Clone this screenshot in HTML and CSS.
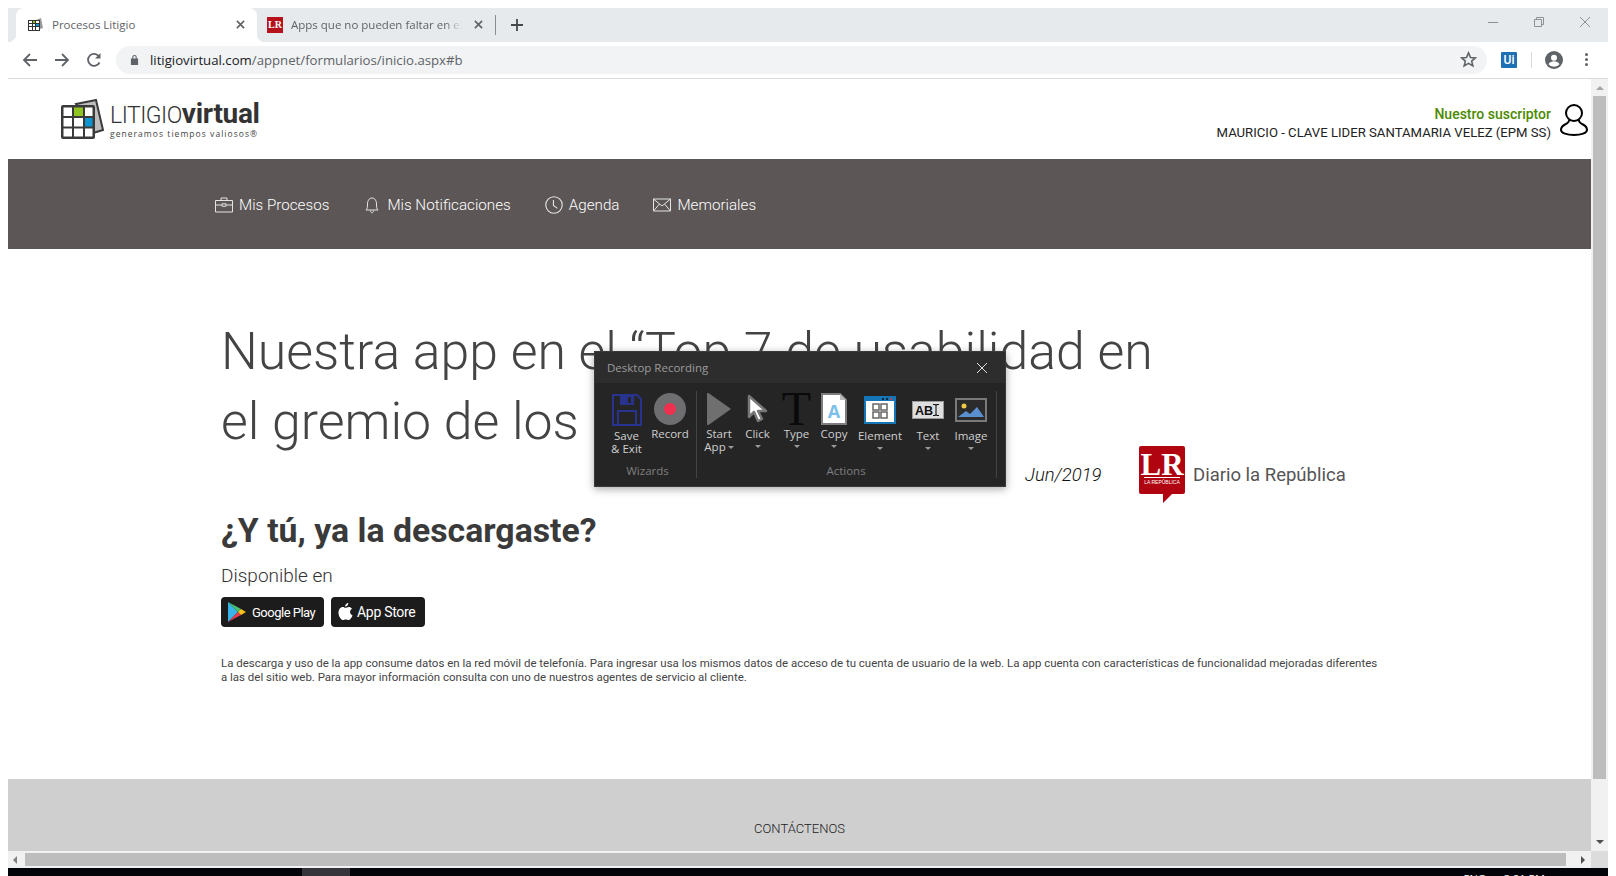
FILE: index.html
```html
<!DOCTYPE html>
<html lang="es">

<head>
    <meta charset="UTF-8">
    <title>Procesos Litigio</title>
    <link rel="stylesheet" href="styles.css">
</head>

<body>
    <div class="tabstrip">
        <div class="tab tab-active">
            <svg class="favicon" viewBox="0 0 16 16"><path d="M9 3l5-2 2 10-3 1z" fill="#999"/><rect x="1" y="3" width="12" height="11" fill="#333"/><path d="M2 4h3v2H2zM6 4h2v2H6zM9 4h3v2H9zM2 7h3v2H2zM6 7h2v2H6zM2 10h3v3H2zM6 10h2v3H6zM9 10h3v3H9z" fill="#fff"/><rect x="6" y="4" width="2" height="2" fill="#8fc31f"/><rect x="9" y="7" width="3" height="2" fill="#0a94d0"/></svg>
            <span class="tab-title">Procesos Litigio</span>
            <svg class="tab-close" viewBox="0 0 10 10"><path d="M1 1l8 8M9 1l-8 8"/></svg>
        </div>
        <div class="tab tab-other">
            <span class="favicon-lr">LR</span>
            <span class="tab-title tab-fade">Apps que no pueden faltar en el celular</span>
            <svg class="tab-close" viewBox="0 0 10 10"><path d="M1 1l8 8M9 1l-8 8"/></svg>
        </div>
        <span class="tab-divider"></span>
        <svg class="new-tab" viewBox="0 0 12 12"><path d="M6 0v12M0 6h12"/></svg>
        <div class="window-btns">
            <span class="win-btn"><svg viewBox="0 0 10 10" width="10" height="10"><path d="M0 5.5h10"/></svg></span>
            <span class="win-btn"><svg viewBox="0 0 10 10" width="10" height="10"><path d="M.5 2.5h7v7h-7zM2.5 2.5v-2h7v7h-2"/></svg></span>
            <span class="win-btn"><svg viewBox="0 0 10 10" width="10" height="10"><path d="M0 0l10 10M10 0L0 10"/></svg></span>
        </div>
    </div>

    <div class="toolbar">
        <span class="nav-btn"><svg viewBox="0 0 16 16"><path d="M15 8H2M8 2L2 8l6 6"/></svg></span>
        <span class="nav-btn"><svg viewBox="0 0 16 16"><path d="M1 8h13M8 2l6 6-6 6"/></svg></span>
        <span class="nav-btn"><svg viewBox="0 0 16 16"><path d="M13.5 10.5A6 6 0 1 1 13 4.5"/><path class="solid" d="M14.500 1v5.500H9z"/></svg></span>
        <div class="omnibox">
            <svg class="lock" viewBox="0 0 10 12"><path d="M2.500 5V3.500a2.500 2.500 0 0 1 5 0V5h1.500v7H1V5zM3.700 5h2.600V3.500a1.300 1.300 0 0 0-2.600 0z"/></svg>
            <span class="url"><span class="url-host">litigiovirtual.com</span>/appnet/formularios/inicio.aspx#b</span>
            <svg class="star" viewBox="0 0 16 16"><path d="M8 1.800l1.900 4.300 4.600.4-3.500 3 1.100 4.600L8 11.700l-4.100 2.400L5 9.500l-3.500-3 4.600-.4z"/></svg>
        </div>
        <span class="ext-ui">Ui</span>
        <span class="toolbar-divider"></span>
        <svg class="avatar" viewBox="0 0 18 18"><circle cx="9" cy="9" r="9"/><circle cx="9" cy="6.800" r="3" fill="#fff"/><path d="M3.500 13.200c1-2 3.500-2.900 5.500-2.900s4.500.9 5.500 2.900a7 7 0 0 1-11 0z" fill="#fff"/></svg>
        <span class="dots"><i></i><i></i><i></i></span>
    </div>

    <div class="viewport">
        <div class="page">
            <header class="site-header">
                <div class="logo">
                    <svg class="logo-mark" viewBox="0 0 44 41">
                        <path d="M16 5L36 1l7 30-10 3z" fill="#bdbdbd" stroke="#3a3a3a" stroke-width="2"/>
                        <rect x="1" y="6" width="34" height="34" rx="2" fill="#3a3a3a"/>
                        <rect x="3.500" y="8.500" width="8.500" height="8.500" fill="#fff"/><rect x="14" y="8.500" width="9" height="8.500" fill="#8fc31f"/><rect x="25" y="8.500" width="7.500" height="8.500" fill="#fff"/>
                        <rect x="3.500" y="19" width="8.500" height="8.500" fill="#fff"/><rect x="14" y="19" width="9" height="8.500" fill="#fff"/><rect x="25" y="19" width="7.500" height="8.500" fill="#0a94d0"/>
                        <rect x="3.500" y="29.500" width="8.500" height="8" fill="#fff"/><rect x="14" y="29.500" width="9" height="8" fill="#fff"/><rect x="25" y="29.500" width="7.500" height="8" fill="#fff"/>
                    </svg>
                    <div class="logo-text">
                        <div class="logo-name"><span class="logo-light">LITIGIO</span><span class="logo-bold">virtual</span></div>
                        <div class="logo-tag">generamos tiempos valiosos®</div>
                    </div>
                </div>
                <div class="user">
                    <div class="user-text">
                        <div class="user-label">Nuestro suscriptor</div>
                        <div class="user-name">MAURICIO - CLAVE LIDER SANTAMARIA VELEZ (EPM SS)</div>
                    </div>
                    <svg class="user-icon" viewBox="0 0 28 33"><circle cx="14" cy="10" r="8"/><path d="M9 16.500c.5 2-1 3.500-4 5-3 1.500-4 3.500-4 5.500 0 3 6 5 13 5s13-2 13-5c0-2-1-4-4-5.500-3-1.500-4.500-3-4-5"/></svg>
                </div>
            </header>

            <nav class="main-nav">
                <a class="nav-item">
                    <svg viewBox="0 0 18 16"><path d="M.5 3.500h17v11.500H.5zM6 3.500V1h6v2.500M.5 8h6.500M11 8h6.500M7 6.800h4v2.400H7z"/></svg>
                    Mis Procesos
                </a>
                <a class="nav-item">
                    <svg viewBox="0 0 14 18"><path d="M1 14c1.500-1.500 1.500-3 1.500-6s1.500-6 4.500-6 4.500 3 4.500 6 0 4.500 1.500 6zM5.500 14.500c0 3 3 3 3 0"/></svg>
                    Mis Notificaciones
                </a>
                <a class="nav-item">
                    <svg viewBox="0 0 16 16"><circle cx="8" cy="8" r="7.300"/><path d="M7.500 3.500V8.500L11 11"/></svg>
                    Agenda
                </a>
                <a class="nav-item">
                    <svg viewBox="0 0 18 14"><path d="M.5 1h17v12H.5zM.5 1L9 8l8.500-7M.5 13l6-7M17.500 13l-6-7"/></svg>
                    Memoriales
                </a>
            </nav>

            <main class="content">
                <h1 class="headline">Nuestra app en el “Top 7 de usabilidad en el gremio de los abogados”</h1>
                <div class="source">
                    <span class="source-date">Jun/2019</span>
                    <svg class="source-logo" viewBox="0 0 46 58">
                        <path d="M2 0h42a2 2 0 0 1 2 2v44a2 2 0 0 1-2 2H33L24 57v-9H2a2 2 0 0 1-2-2V2a2 2 0 0 1 2-2z" fill="#b00410"/>
                        <text class="lr-big" x="23" y="29" text-anchor="middle">LR</text>
                        <rect x="5" y="31" width="36" height="1" fill="#fff"/>
                        <text class="lr-small" x="23" y="38" text-anchor="middle">LA REPÚBLICA</text>
                    </svg>
                    <span class="source-name">Diario la República</span>
                </div>
                <h2 class="download-title">¿Y tú, ya la descargaste?</h2>
                <p class="available">Disponible en</p>
                <div class="badges">
                    <a class="badge badge-play">
                        <svg viewBox="0 0 18 20" width="18" height="20">
                            <path d="M0 0l10 10L0 20z" fill="#39b4e8"/>
                            <path d="M0 0l13 7-3 3z" fill="#48c06f"/>
                            <path d="M0 20l13-7-3-3z" fill="#e8384c"/>
                            <path d="M13 7l5 3-5 3-3-3z" fill="#f8c21c"/>
                        </svg>
                        Google Play
                    </a>
                    <a class="badge badge-apple">
                        <svg viewBox="0 0 16 19" width="15" height="18"><path fill="#fff" d="M11 0c.2 1.800-1.500 3.900-3.400 3.700C7.400 2 9.200.1 11 0zM8 5c1 0 2-.9 3.400-.9 1.300 0 2.700.7 3.500 1.900-3 1.700-2.500 5.900.6 7.100-.8 2.100-2.500 5-4.300 5-1 0-1.600-.7-2.900-.7s-2 .7-3 .7C3 18.100.5 13.700.5 10.300.5 6.700 2.800 4.200 5 4.200 6.200 4.200 7.200 5 8 5z"/></svg>
                        App Store
                    </a>
                </div>
                <p class="note">La descarga y uso de la app consume datos en la red móvil de telefonía. Para ingresar usa los mismos datos de acceso de tu cuenta de usuario de la web. La app cuenta con características de funcionalidad mejoradas diferentes a las del sitio web. Para mayor información consulta con uno de nuestros agentes de servicio al cliente.</p>
            </main>

            <footer class="site-footer">CONTÁCTENOS</footer>
        </div>
        <div class="vscroll">
            <span class="arrow arrow-up"></span>
            <span class="vthumb"></span>
            <span class="arrow arrow-down"></span>
        </div>
    </div>

    <div class="hscroll">
        <span class="arrow arrow-left"></span>
        <span class="hthumb"></span>
        <span class="arrow arrow-right"></span>
        <span class="corner"></span>
    </div>

    <div class="taskbar">
        <span class="task-btn"></span>
        <span class="tray-lang">ENG</span>
        <span class="tray-time">3:21 PM</span>
    </div>

    <!-- floating recorder window -->
    <div class="recorder">
        <div class="rec-title">
            <span>Desktop Recording</span>
            <svg viewBox="0 0 12 12" width="12" height="12"><path d="M1 1l10 10M11 1L1 11"/></svg>
        </div>
        <div class="rec-body">
            <section class="rec-group rec-wizards">
                <div class="rec-tools">
                    <div class="tool tool-save">
                        <div class="tool-icon icon-low">
                            <svg width="30" height="32" viewBox="0 0 30 32"><path d="M1 1h24l4 4v26H1z" fill="none" stroke="#27338f" stroke-width="2"/><path d="M8 1h14v10H8z" fill="#27338f"/><rect x="16" y="3" width="3" height="6" fill="#252526"/><path d="M6 31V17h18v14" fill="none" stroke="#27338f" stroke-width="2"/></svg>
                        </div>
                        <span>Save<br>&amp; Exit</span>
                    </div>
                    <div class="tool tool-record">
                        <div class="tool-icon">
                            <svg width="32" height="32" viewBox="0 0 32 32"><circle cx="16" cy="16" r="16" fill="#6e6e70"/><circle cx="16" cy="16" r="6" fill="#f0304f"/></svg>
                        </div>
                        <span>Record</span>
                    </div>
                </div>
                <div class="rec-caption">Wizards</div>
            </section>
            <section class="rec-group rec-actions">
                <div class="rec-tools">
                    <div class="tool tool-start">
                        <div class="tool-icon">
                            <svg width="24" height="32" viewBox="0 0 24 32"><path d="M0 1a1 1 0 0 1 1.500-1L24 16 1.500 32A1 1 0 0 1 0 31z" fill="#6f6f6f"/></svg>
                        </div>
                        <span>Start<br>App<i class="caret caret-inline"></i></span>
                    </div>
                    <div class="tool tool-click">
                        <div class="tool-icon">
                            <svg width="22" height="30" viewBox="0 0 22 30"><path d="M2 2v21l5-5 4 9 4-2-4-8h8z" fill="#fff" stroke="#777" stroke-width="2.500" stroke-linejoin="round"/></svg>
                        </div>
                        <span>Click</span>
                        <i class="caret"></i>
                    </div>
                    <div class="tool tool-type">
                        <div class="tool-icon"><span class="type-glyph">T</span></div>
                        <span>Type</span>
                        <i class="caret"></i>
                    </div>
                    <div class="tool tool-copy">
                        <div class="tool-icon">
                            <svg width="26" height="32" viewBox="0 0 26 32"><path d="M1 1h18l6 6v24H1z" fill="#fff" stroke="#7d7d7d" stroke-width="2"/><path d="M19 1v6h6z" fill="#bbb"/><text class="copy-a" x="13" y="25" text-anchor="middle">A</text></svg>
                        </div>
                        <span>Copy</span>
                        <i class="caret"></i>
                    </div>
                    <div class="tool tool-element">
                        <div class="tool-icon icon-low">
                            <svg width="32" height="28" viewBox="0 0 32 28"><rect width="32" height="28" fill="#1476b6"/><rect x="2" y="5" width="28" height="21" fill="#fff"/><circle cx="19" cy="3" r="1" fill="#111"/><circle cx="23" cy="3" r="1" fill="#111"/><circle cx="27" cy="3" r="1" fill="#e33"/><path d="M9 9h6v6H9zM17 9h6v6h-6zM9 17h6v6H9zM17 17h6v6h-6z" transform="translate(0 -1)" fill="none" stroke="#666" stroke-width="1.500"/></svg>
                        </div>
                        <span>Element</span>
                        <i class="caret"></i>
                    </div>
                    <div class="tool tool-text">
                        <div class="tool-icon icon-low">
                            <svg width="32" height="18" viewBox="0 0 32 18"><rect width="32" height="18" fill="#dedede"/><rect x=".5" y=".5" width="31" height="17" fill="none" stroke="#9a9a9a"/><text class="abi" x="3" y="13.500">AB</text><path d="M21 3.500h2l1 1 1-1h2M24 4.500v9M21 14.500h2l1-1 1 1h2" fill="none" stroke="#111" stroke-width="1.100"/></svg>
                        </div>
                        <span>Text</span>
                        <i class="caret"></i>
                    </div>
                    <div class="tool tool-image">
                        <div class="tool-icon icon-low">
                            <svg width="32" height="24" viewBox="0 0 32 24"><rect x="1" y="1" width="30" height="22" fill="#2b2b2b" stroke="#7a7a7a" stroke-width="2"/><circle cx="9" cy="8" r="2.500" fill="#f1c84a"/><path d="M3 19l8-6 4 3 7-7 7 10z" fill="#5a8fd0"/></svg>
                        </div>
                        <span>Image</span>
                        <i class="caret"></i>
                    </div>
                </div>
                <div class="rec-caption">Actions</div>
            </section>
        </div>
    </div>
</body>

</html>
```

FILE: styles.css
```css
* {
    box-sizing: border-box;
}

html,
body {
    height: 100%;
}

body {
    margin: 0;
    padding: 8px 8px 0;
    width: 1616px;
    height: 876px;
    overflow: hidden;
    background: #fff;
    font-family: Roboto, sans-serif;
    display: flex;
    flex-direction: column;
    position: relative;
}

/* browser chrome */
.tabstrip {
    height: 34px;
    flex: none;
    background: #e7eaed;
    display: flex;
    align-items: stretch;
    padding-left: 8px;
}

.tab {
    display: flex;
    align-items: center;
    font-family: "Open Sans", sans-serif;
    font-size: 11.500px;
    color: #5f6368;
    position: relative;
    padding-bottom: 1px;
}

.tab-active {
    width: 241px;
    background: #fff;
    border-radius: 8px 8px 0 0;
    padding-left: 11px;
    padding-right: 12px;
}

.tab-active::before,
.tab-active::after {
    content: "";
    position: absolute;
    bottom: 0;
    width: 8px;
    height: 8px;
}

.tab-active::before {
    left: -8px;
    background: radial-gradient(circle at 0 0, #e7eaed 8px, #fff 8.500px);
}

.tab-active::after {
    right: -8px;
    background: radial-gradient(circle at 100% 0, #e7eaed 8px, #fff 8.500px);
}

.tab-other {
    width: 238px;
    padding-left: 10px;
    padding-right: 12px;
}

.favicon {
    width: 16px;
    height: 16px;
    flex: none;
    margin-right: 9px;
}

.favicon-lr {
    width: 16px;
    height: 16px;
    flex: none;
    margin-right: 8px;
    background: #b5121b;
    color: #fff;
    font: bold 10px/16px "Liberation Serif", serif;
    text-align: center;
}

.tab-title {
    flex: 1;
    white-space: nowrap;
    overflow: hidden;
}

.tab-fade {
    -webkit-mask-image: linear-gradient(to right, #000 90%, transparent 100%);
    mask-image: linear-gradient(to right, #000 90%, transparent 100%);
}

.tab-close {
    width: 9px;
    height: 9px;
    flex: none;
    margin-left: 12px;
    stroke: #5f6368;
    stroke-width: 1.800;
    fill: none;
}

.tab-divider {
    width: 1px;
    height: 20px;
    background: #8a8d90;
    align-self: center;
}

.new-tab {
    width: 12px;
    height: 12px;
    align-self: center;
    margin-left: 15px;
    stroke: #45484c;
    stroke-width: 1.800;
    fill: none;
}

.window-btns {
    margin-left: auto;
    display: flex;
}

.win-btn {
    width: 46px;
    display: flex;
    align-items: center;
    justify-content: center;
    padding-bottom: 6px;
}

.win-btn svg {
    fill: none;
    stroke: #8d8f92;
    stroke-width: 1;
}

.toolbar {
    height: 37px;
    flex: none;
    display: flex;
    align-items: center;
    padding: 0 0 1px 6px;
    border-bottom: 1px solid #dadada;
}

.nav-btn {
    width: 32px;
    display: flex;
    justify-content: center;
}

.nav-btn svg {
    width: 16px;
    height: 16px;
    fill: none;
    stroke: #5f6368;
    stroke-width: 1.800;
}

.nav-btn .solid {
    fill: #5f6368;
    stroke: none;
}

.omnibox {
    width: 1371px;
    height: 28px;
    margin-left: 6px;
    border-radius: 14px;
    background: #f1f3f4;
    display: flex;
    align-items: center;
    padding: 0 10px 0 14px;
}

.lock {
    width: 9px;
    height: 11px;
    fill: #5f6368;
    flex: none;
}

.url {
    margin-left: 11px;
    font-family: "Open Sans", sans-serif;
    font-size: 13.200px;
    color: #5f6368;
    flex: 1;
}

.url-host {
    color: #202124;
}

.star {
    width: 17px;
    height: 17px;
    fill: none;
    stroke: #5f6368;
    stroke-width: 1.500;
    flex: none;
}

.ext-ui {
    width: 16px;
    height: 16px;
    margin-left: 14px;
    background: #1f6fb5;
    border-radius: 1px;
    color: #fff;
    font: 500 12px/16px Roboto, sans-serif;
    text-align: center;
}

.toolbar-divider {
    width: 1px;
    height: 16px;
    margin-left: 14px;
    background: #d5d7da;
}

.avatar {
    width: 18px;
    height: 18px;
    margin-left: 13px;
    fill: #5f6368;
}

.dots {
    margin-left: 22px;
    display: flex;
    flex-direction: column;
    gap: 2px;
}

.dots i {
    width: 3px;
    height: 3px;
    border-radius: 50%;
    background: #5f6368;
}

/* scrolling area */
.viewport {
    flex: 1;
    display: flex;
    min-height: 0;
}

.page {
    flex: 1;
    display: flex;
    flex-direction: column;
    min-width: 0;
}

.site-header {
    height: 80px;
    flex: none;
    display: flex;
    justify-content: space-between;
    align-items: center;
    padding: 0 3px 0 52px;
}

.logo {
    display: flex;
    align-items: center;
    gap: 6px;
}

.logo-mark {
    width: 44px;
    height: 41px;
}

.logo-text {
    color: #333;
}

.logo-name {
    height: 28px;
    line-height: 28px;
    white-space: nowrap;
}

.logo-light {
    font-weight: 300;
    font-size: 23px;
    letter-spacing: -0.500px;
}

.logo-bold {
    font-weight: 700;
    font-size: 28px;
    letter-spacing: -0.300px;
}

.logo-tag {
    font-family: "Open Sans", sans-serif;
    font-size: 8.500px;
    letter-spacing: 1.050px;
    line-height: 11px;
    color: #444;
    white-space: nowrap;
}

.user {
    display: flex;
    align-items: center;
    gap: 9px;
}

.user-text {
    text-align: right;
    padding-top: 9px;
}

.user-label {
    color: #4d8a00;
    font-size: 14px;
    font-weight: 500;
    line-height: 19px;
}

.user-name {
    color: #222;
    font-size: 13.150px;
    line-height: 18px;
}

.user-icon {
    width: 28px;
    height: 33px;
    fill: none;
    stroke: #000;
    stroke-width: 2;
}

.main-nav {
    height: 90px;
    flex: none;
    background: #5c5656;
    display: flex;
    align-items: center;
    gap: 34px;
    padding: 2px 0 0 207px;
}

.nav-item {
    display: flex;
    align-items: center;
    gap: 6px;
    color: #fff;
    font-size: 15.200px;
    font-weight: 300;
}

.nav-item svg {
    height: 18px;
    width: 18px;
    fill: none;
    stroke: #e4e4e4;
    stroke-width: 1;
}

.content {
    flex: 1;
    padding: 68px 0 0 213px;
    color: #333;
}

.headline {
    margin: 0;
    width: 960px;
    font-size: 51.800px;
    line-height: 70px;
    font-weight: 300;
    color: #444;
}

.source {
    margin: -11px 0 0 804px;
    height: 58px;
    display: flex;
    align-items: center;
}

.source-date {
    width: 114px;
    font-size: 18.500px;
    font-style: italic;
    font-weight: 300;
    color: #111;
}

.source-logo {
    width: 46px;
    height: 58px;
    flex: none;
}

.lr-big {
    font: bold 31px "Liberation Serif", serif;
    fill: #fff;
}

.lr-small {
    font: 5px "Liberation Sans", sans-serif;
    fill: #fff;
}

.source-name {
    margin-left: 8px;
    font-size: 18.500px;
    color: #555;
}

.download-title {
    margin: 6px 0 0;
    font-size: 33.800px;
    line-height: 42px;
    font-weight: 700;
    color: #3a3a3a;
}

.available {
    margin: 12px 0 0;
    font-size: 19px;
    line-height: 24px;
    font-weight: 300;
    color: #333;
}

.badges {
    margin-top: 9px;
    display: flex;
    gap: 7px;
}

.badge {
    height: 30px;
    display: flex;
    align-items: center;
    border-radius: 4px;
    background: #1c1c1c;
    color: #fff;
    font-size: 14px;
    font-weight: 400;
    letter-spacing: -0.300px;
}

.badge-play {
    width: 103px;
    gap: 6px;
    padding-left: 7px;
    font-size: 13px;
    letter-spacing: -0.500px;
}

.badge-apple {
    width: 94px;
    gap: 4px;
    padding-left: 7px;
}

.note {
    margin: 29px 0 0;
    width: 1160px;
    font-size: 11.480px;
    line-height: 14px;
    color: #444;
}

.site-footer {
    height: 72px;
    flex: none;
    background: #cfcfcf;
    padding-top: 43px;
    text-align: center;
    font-size: 13px;
    font-weight: 300;
    line-height: 14px;
    color: #222;
}

/* scrollbars */
.vscroll {
    width: 17px;
    flex: none;
    background: #f1f1f1;
    display: flex;
    flex-direction: column;
    align-items: center;
}

.vthumb {
    width: 13px;
    height: 683px;
    margin-top: 6px;
    background: #bdbdbd;
}

.arrow {
    width: 0;
    height: 0;
    border: 4px solid transparent;
    flex: none;
}

.arrow-up {
    border-bottom: 4px solid #a3a3a3;
    border-top-width: 0;
    margin-top: 7px;
}

.arrow-down {
    border-top: 4px solid #505050;
    border-bottom-width: 0;
    margin-top: auto;
    margin-bottom: 7px;
}

.hscroll {
    height: 17px;
    flex: none;
    background: #f1f1f1;
    display: flex;
    align-items: center;
}

.hthumb {
    width: 1541px;
    height: 13px;
    margin-left: 5px;
    background: #bdbdbd;
}

.arrow-left {
    border-right: 4px solid #808080;
    border-left-width: 0;
    margin-left: 5px;
    margin-right: 3px;
}

.arrow-right {
    border-left: 4px solid #505050;
    border-right-width: 0;
    margin-left: 15px;
}

.corner {
    width: 17px;
    height: 17px;
    margin-left: auto;
    background: #dcdcdc;
}

.taskbar {
    height: 8px;
    flex: none;
    background: #02040a;
    display: flex;
    overflow: hidden;
    color: #fff;
    font-family: "Open Sans", sans-serif;
    font-size: 11px;
    line-height: 16px;
}

.task-btn {
    width: 48px;
    margin-left: 294px;
    background: #34343a;
}

.tray-lang {
    margin-left: auto;
    padding-top: 3px;
}

.tray-time {
    margin-left: 18px;
    padding-top: 3px;
    margin-right: 63px;
}

/* recorder window sits over the page */
.recorder {
    position: absolute;
    left: 594px;
    top: 351px;
    width: 412px;
    height: 136px;
    background: #252526;
    border: 1px solid #3a3a3a;
    box-shadow: 0 2px 8px rgba(0, 0, 0, 0.35);
    font-family: "Open Sans", sans-serif;
    font-size: 11.500px;
    color: #cfcfcf;
}

.rec-title {
    height: 31px;
    background: #2d2d2e;
    display: flex;
    align-items: center;
    justify-content: space-between;
    padding: 0 16px 0 12px;
    color: #9b9b9b;
    font-size: 11.500px;
}

.rec-title svg {
    margin-right: 1px;
    fill: none;
    stroke: #e2e2e2;
    stroke-width: 1;
}

.rec-body {
    display: flex;
    height: 104px;
    padding: 8px 0 9px 10px;
}

.rec-group {
    display: flex;
    flex-direction: column;
    border-right: 1px solid #444;
}

.rec-wizards {
    width: 92px;
}

.rec-actions {
    width: 300px;
    padding-left: 3px;
}

.rec-tools {
    flex: 1;
    display: flex;
}

.rec-caption {
    text-align: center;
    color: #7f7f7f;
    font-size: 11.500px;
    line-height: 14px;
}

.rec-wizards .rec-caption {
    padding-right: 6px;
}

.rec-actions .rec-caption {
    padding-right: 4px;
}

.tool {
    display: flex;
    flex-direction: column;
    align-items: center;
    text-align: center;
    line-height: 13px;
    white-space: nowrap;
}

.tool-save {
    width: 43px;
}

.tool-record {
    width: 44px;
}

.tool-start {
    width: 38px;
}

.tool-click {
    width: 39px;
}

.tool-type {
    width: 39px;
}

.tool-copy {
    width: 36px;
}

.tool-element {
    width: 56px;
}

.tool-text {
    width: 40px;
}

.tool-image {
    width: 46px;
}

.tool-icon {
    height: 36px;
    display: flex;
    align-items: center;
    justify-content: center;
}

.icon-low {
    height: 38px;
}

.type-glyph {
    font: 48px/36px "Liberation Serif", serif;
    color: #0a0a0a;
}

.copy-a {
    font: bold 18px "Open Sans", sans-serif;
    fill: #7cc0ea;
}

.abi {
    font: bold 12.500px "Liberation Sans", sans-serif;
    fill: #111;
}

.caret {
    width: 0;
    height: 0;
    margin-top: 5px;
    border: 3px solid transparent;
    border-top: 3px solid #9a9a9a;
    border-bottom-width: 0;
}

.caret-inline {
    display: inline-block;
    margin: 0 0 2px 2px;
}
```
